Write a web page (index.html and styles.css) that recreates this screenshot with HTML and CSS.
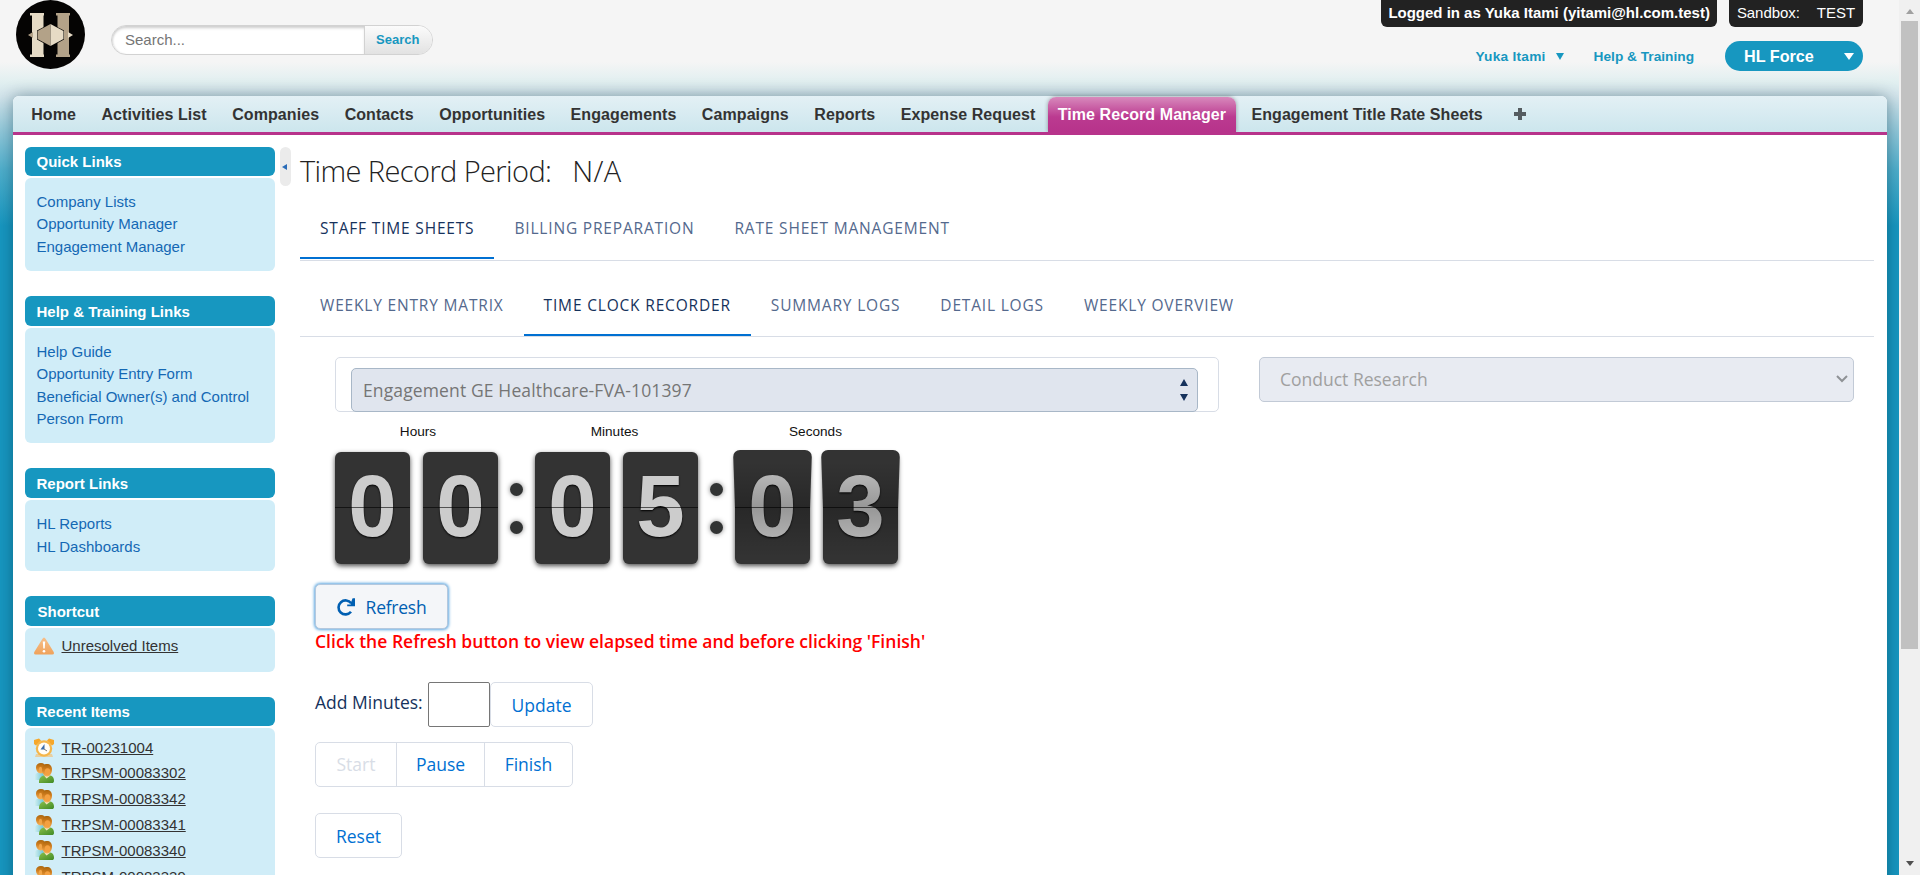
FILE: index.html
```html
<!DOCTYPE html>
<html lang="en">
<head>
<meta charset="utf-8">
<title>Time Record Manager</title>
<link rel="stylesheet" href="styles.css">
</head>
<body>
<svg class="defs" width="0" height="0">
  <defs>
    <linearGradient id="hairGold" x1="0" y1="0" x2="0" y2="1"><stop offset="0" stop-color="#a9640c"/><stop offset=".4" stop-color="#cf7d1e"/><stop offset="1" stop-color="#f8b45c"/></linearGradient>
    <linearGradient id="coatGreen" x1="0" y1="0" x2="1" y2="1"><stop offset="0" stop-color="#8cc04a"/><stop offset="1" stop-color="#3f8a26"/></linearGradient>
    <linearGradient id="coatBlue" x1="0" y1="0" x2="1" y2="0"><stop offset="0" stop-color="#d8f1f4"/><stop offset="1" stop-color="#5fc0cf"/></linearGradient>
    <linearGradient id="warn" x1="0" y1="0" x2="0" y2="1"><stop offset="0" stop-color="#f6c08c"/><stop offset="1" stop-color="#f0a25a"/></linearGradient>
    <symbol id="people" viewBox="0 0 20 20">
      <path d="M0 16.500c0-4.500 2-7 5-7h4l2 7.500H2z" fill="url(#coatBlue)"/>
      <path d="M2 4.500C2 1.500 4 0 7 0s4.500 1.500 4.500 4.500-1.500 6-4.500 6-5-3-5-6z" fill="url(#hairGold)"/>
      <path d="M5 20c-.5-5 2.500-7.500 6-7.500h4c3.500 0 5 2 5 5.500 0 1.500-1 2-2 2z" fill="url(#coatGreen)"/>
      <path d="M10 12.500l2.500 3 4-3z" fill="#f3e3c0"/>
      <path d="M8 6.500C8 3 10 1 13 1s5 2 5 5.500-2 7-5 7-5-3.500-5-7z" fill="url(#hairGold)"/>
      <ellipse cx="13.500" cy="8.800" rx="2.800" ry="3.500" fill="#f4a040"/>
      <ellipse cx="6.500" cy="6.500" rx="1.600" ry="2.800" fill="#f2a648"/>
    </symbol>
  </defs>
</svg>
<div class="page">
  <div class="app">
    <header class="header">
      <svg class="logo" viewBox="0 0 69 69">
        <circle cx="34.500" cy="34.500" r="34.500" fill="#050403"/>
        <g fill="#e6dbc5"><rect x="16" y="13" width="11.500" height="44"/><rect x="14" y="13" width="14" height="2.500"/><rect x="14" y="54.500" width="14" height="2.500"/></g>
        <g fill="#b3a288"><rect x="41.500" y="13" width="11.500" height="44"/><rect x="40" y="13" width="14" height="2.500"/><rect x="40" y="54.500" width="14" height="2.500"/></g>
        <path d="M12 35l5-3v6z" fill="#b3a288"/><path d="M57 35l-5-3v6z" fill="#e6dbc5"/>
        <path d="M34.500 23.500l13.500 7v9l-13.500 7.500L21 39.500v-9z" fill="#050403"/>
        <path d="M34.500 24L21.500 31v8l13 7z" fill="#b3a288"/><path d="M34.500 24l13 7v8l-13 7z" fill="#e6dbc5"/>
      </svg>
      <div class="search"><div class="search-field">Search...</div><div class="search-button">Search</div></div>
      <div class="header-right">
        <div class="badges"><div class="badge strong">Logged in as Yuka Itami (yitami@hl.com.test)</div><div class="badge env"><span>Sandbox:</span><span>TEST</span></div></div>
        <div class="user-links"><span class="user">Yuka Itami</span><i class="caret"></i><span class="help">Help &amp; Training</span><div class="app-menu"><span>HL Force</span><i class="caret white"></i></div></div>
      </div>
    </header>
    <div class="panel">
      <nav class="nav">
        <a>Home</a><a>Activities List</a><a>Companies</a><a>Contacts</a><a>Opportunities</a><a>Engagements</a><a>Campaigns</a><a>Reports</a><a>Expense Request</a><a class="current">Time Record Manager</a><a>Engagement Title Rate Sheets</a>
        <svg class="plus" viewBox="0 0 12 12"><path d="M4 0h4v4h4v4H8v4H4V8H0V4h4z" fill="#555c60"/></svg>
      </nav>
      <div class="content">
        <aside class="sidebar">
          <section class="box"><h3>Quick Links</h3><div class="links"><a>Company Lists</a><a>Opportunity Manager</a><a>Engagement Manager</a></div></section>
          <section class="box tall"><h3>Help &amp; Training Links</h3><div class="links"><a>Help Guide</a><a>Opportunity Entry Form</a><a>Beneficial Owner(s) and Control Person Form</a></div></section>
          <section class="box tall"><h3>Report Links</h3><div class="links"><a>HL Reports</a><a>HL Dashboards</a></div></section>
          <section class="box tall"><h3 class="nudge">Shortcut</h3><div class="items single"><a><svg viewBox="0 0 20 20"><path d="M8.300 3q1.700-3 3.400 0l8 13q1 2.500-1.500 2.500H1.800Q-.7 18.500.3 16z" fill="url(#warn)"/><path d="M8.800 5.500h2.400l-.5 7H9.300z" fill="#fff"/><circle cx="10" cy="15.200" r="1.300" fill="#fff"/></svg><span>Unresolved Items</span></a></div></section>
          <section class="box"><h3>Recent Items</h3><div class="items recent">
            <a><svg viewBox="0 0 20 20"><path d="M0 2l5-1.500 2 2L2 7.500 0 6zM20 2l-5-1.500-2 2 5 5 2-1.500z" fill="#f6a72a"/><path d="M2 16h16l1 3H1z" fill="#e8cfa0"/><circle cx="10" cy="10.500" r="8.200" fill="#f5b64a"/><circle cx="10" cy="10.500" r="6" fill="#fffdf8"/><path d="M10.500 6v5.500H6.500z" fill="#3a6aa8"/><path d="M10 11l3 2" stroke="#777" fill="none"/></svg><span>TR-00231004</span></a>
            <a><svg><use href="#people"/></svg><span>TRPSM-00083302</span></a>
            <a><svg><use href="#people"/></svg><span>TRPSM-00083342</span></a>
            <a><svg><use href="#people"/></svg><span>TRPSM-00083341</span></a>
            <a><svg><use href="#people"/></svg><span>TRPSM-00083340</span></a>
            <a><svg><use href="#people"/></svg><span>TRPSM-00083339</span></a>
          </div></section>
        </aside>
        <div class="collapse"><i></i></div>
        <main class="main">
          <h1>Time Record Period: <span>N/A</span></h1>
          <div class="tabs outer"><a class="on">STAFF TIME SHEETS</a><a>BILLING PREPARATION</a><a>RATE SHEET MANAGEMENT</a></div>
          <div class="tabs inner"><a>WEEKLY ENTRY MATRIX</a><a class="on">TIME CLOCK RECORDER</a><a>SUMMARY LOGS</a><a>DETAIL LOGS</a><a>WEEKLY OVERVIEW</a></div>
          <div class="fields">
            <div class="lookup"><div class="lookup-input"><span>Engagement GE Healthcare-FVA-101397</span><svg width="8" height="22" viewBox="0 0 8 22"><path d="M4 0l4 7H0zM4 22l4-7H0z" fill="#16325c"/></svg></div></div>
            <div class="select"><span>Conduct Research</span><svg width="12" height="8" viewBox="0 0 12 8"><path d="M1 1l5 5 5-5" fill="none" stroke="#8f9296" stroke-width="2"/></svg></div>
          </div>
          <div class="clock">
            <div class="unit"><label class="hours">Hours</label><div class="digits"><b>0</b><b>0</b></div></div>
            <div class="colon"><i></i><i></i></div>
            <div class="unit"><label class="minutes">Minutes</label><div class="digits"><b>0</b><b>5</b></div></div>
            <div class="colon"><i></i><i></i></div>
            <div class="unit"><label class="seconds">Seconds</label><div class="digits flipping"><b>0</b><b>3</b></div></div>
          </div>
          <div class="actions">
            <div class="button refresh"><svg width="18" height="18" viewBox="0 0 18 18"><path d="M14 13.800A7 7 0 1 1 14.200 5.300" fill="none" stroke="#005fb2" stroke-width="2.600"/><path d="M18 .3v8h-7.800V6.500h3.600V5L15.600.3z" fill="#005fb2"/></svg><span>Refresh</span></div>
            <p class="warning">Click the Refresh button to view elapsed time and before clicking 'Finish'</p>
            <div class="add-row"><label>Add Minutes:</label><input class="minutes-input" type="text"><div class="button update">Update</div></div>
            <div class="group"><div class="disabled">Start</div><div>Pause</div><div>Finish</div></div>
            <div class="button reset">Reset</div>
          </div>
        </main>
      </div>
    </div>
  </div>
  <div class="scrollbar"><i class="up"></i><div class="thumb"></div><i class="down"></i></div>
</div>
</body>
</html>
```

FILE: styles.css
```css
* { box-sizing: border-box; }
body { margin: 0; font-family: "Liberation Sans", Arial, sans-serif; font-size: 15px; color: #222; }
h1, h3, p { margin: 0; }
.defs { position: absolute; }
.page { display: flex; width: 1920px; height: 875px; overflow: hidden; }
.app { width: 1899px; height: 875px; overflow: hidden; background: linear-gradient(#f5f5f5 0, #f5f5f5 62px, #e1eff0 82px, #d2e4eb 96px, #8fc7d9 132px, #4fafcc 170px, #1797c0 226px); }

.header { display: flex; height: 96px; padding-left: 16px; }
.logo { width: 69px; height: 69px; margin-top: 0; }
.search { display: flex; width: 322px; height: 30px; margin: 25px 0 0 26px; border: 1px solid #d2d2d2; border-radius: 15px; overflow: hidden; background: #fff; }
.search-field { width: 252px; padding-left: 13px; line-height: 28px; color: #757575; box-shadow: inset 0 3px 3px -1px #ccc, inset 2px 0 2px -1px #ddd; border-radius: 15px 0 0 15px; }
.search-button { flex: 1; padding-left: 11px; border-left: 1px solid #d2d2d2; background: linear-gradient(#fbfbfb, #e2e2e2); color: #1797c0; font-size: 13px; font-weight: bold; line-height: 27px; }
.header-right { margin-left: auto; margin-right: 36px; }
.badges { display: flex; justify-content: flex-end; gap: 12px; }
.badge { height: 27px; padding: 0 8px; border-radius: 0 0 6px 6px; background: #222; color: #fff; line-height: 25px; }
.strong { padding: 0 7px; font-weight: bold; letter-spacing: -.01px; }
.env { display: flex; gap: 17px; letter-spacing: -.05px; }
.user-links { display: flex; align-items: center; justify-content: flex-end; height: 30px; margin-top: 14px; color: #1797c0; font-size: 13.700px; font-weight: bold; }
.user { letter-spacing: .25px; }
.caret { margin-left: 10px; border: 4.500px solid transparent; border-top: 7px solid #1797c0; border-bottom: 0; }
.help { margin-left: 30px; }
.app-menu { display: flex; align-items: center; justify-content: space-between; width: 138px; height: 30px; margin-left: 31px; padding: 0 9px 0 19px; border-radius: 15px; background: #1797c0; color: #fff; font-size: 16.200px; }
.caret.white { border-top-color: #fff; border-left-width: 5px; border-right-width: 5px; }

.panel { width: 1874px; height: 860px; margin-left: 13px; border-radius: 6px 6px 0 0; background: #fff; box-shadow: 0 0 16px rgba(0, 40, 60, .42); }
.nav { display: flex; height: 39px; padding-left: 5.500px; border-bottom: 3px solid #b7338b; border-radius: 6px 6px 0 0; background: linear-gradient(#e3f0f5, #cce6ed); font-size: 16px; font-weight: bold; letter-spacing: .08px; line-height: 37px; color: #333; }
.nav a { margin: 0 3.150px; padding: 0 9.600px; white-space: nowrap; }
.nav .current { margin: 1px 3px 0 0; padding-top: 0; border-radius: 8px 8px 0 0; background: linear-gradient(#d889bc, #bb3a90 20px, #b7338b); box-shadow: 0 0 4px rgba(0, 0, 0, .35); color: #fff; line-height: 35px; clip-path: inset(-4px -4px 0 -4px); }
.plus { width: 12px; height: 12px; margin: 12px 0 0 18px; }

.content { display: flex; padding: 12px 13px 0 12px; }
.sidebar { width: 250px; }
.box { margin-bottom: 25px; }
.box h3 { height: 29px; padding-left: 11.500px; border-radius: 6px; background: #1797c0; color: #fff; font-size: 15px; line-height: 30px; }
.tall h3 { height: 30px; line-height: 32px; }
.box h3.nudge { padding-left: 12.500px; }
.links { margin-top: 2px; padding: 13px 11.500px 12.500px; border-radius: 6px; background: #d0edf8; color: #1468b4; line-height: 22.400px; }
.links::after { content: ""; display: block; height: .3px; }
.links a { display: block; }
.items { margin-top: 2px; padding: 5px 9px; border-radius: 6px; background: #d0edf8; color: #333; }
.single { height: 44px; }
.recent { padding-top: 7px; height: 200px; }
.items a { display: flex; align-items: center; gap: 7.500px; height: 25.800px; text-decoration: none; }
.recent a:first-child { height: 25px; }
.items span { text-decoration: underline; }
.items svg { width: 20px; height: 20px; }
.collapse { display: flex; align-items: center; width: 11px; height: 39px; margin: 0 9px 0 5px; border-radius: 6px; background: #ebebeb; }
.collapse i { margin-left: 2px; border: 3.500px solid transparent; border-right: 5px solid #2a6cb8; border-left: 0; }

.main { flex: 1; height: 728px; font-family: "Open Sans", "Noto Sans", sans-serif; font-size: 17.500px; color: #16325c; }
h1 { height: 48px; font-size: 29px; font-weight: 300; line-height: 48px; letter-spacing: -.6px; color: #222; white-space: nowrap; }
h1 span { margin-left: 14px; letter-spacing: .3px; }
.tabs { display: flex; border-bottom: 1px solid #d8dde6; font-size: 15.500px; line-height: 58px; letter-spacing: .82px; color: #54698d; }
.outer { margin-top: 4px; height: 62px; }
.inner { margin-top: 15px; height: 61px; }
.tabs a { height: 60px; padding: 0 20px; }
.tabs .on { border-bottom: 2px solid #0070d2; color: #16325c; }
.fields { display: flex; gap: 40px; margin: 20px 0 0 35px; height: 54px; }
.lookup { width: 884px; height: 55px; padding: 10px 20px 0 15px; border: 1px solid #d8dde6; border-radius: 5px; }
.lookup-input { display: flex; align-items: center; justify-content: space-between; height: 44px; padding: 0 9px 0 11px; border: 1px solid #a8b7c7; border-radius: 5px; background: #e0e5ee; color: #757575; letter-spacing: .13px; }
.select { display: flex; align-items: center; justify-content: space-between; width: 595px; height: 45px; padding: 0 5px 2px 20px; border: 1px solid #c2cad6; border-radius: 5px; background: #e8ebf2; color: #a0a0a0; }

.clock { display: flex; margin-left: 35px; letter-spacing: 0; }
.unit { width: 163px; }
.unit label { display: block; padding-top: 12px; height: 41px; color: #111; font-family: "Liberation Sans", Arial, sans-serif; font-size: 13.600px; line-height: 18px; text-align: center; }
.unit .hours { padding-left: 3px; }
.unit .minutes { padding-right: 4px; }
.unit .seconds { padding-right: 2px; }
.digits { display: flex; justify-content: space-between; }
.digits b { position: relative; width: 75px; height: 112px; border-radius: 6px; background: #333; box-shadow: 0 2px 5px rgba(0, 0, 0, .7); color: #ccc; font-family: "Liberation Sans", Arial, sans-serif; font-size: 87px; line-height: 107px; text-align: center; text-shadow: 0 1px 2px #000; z-index: 0; }
.digits b::after { content: ""; position: absolute; left: 0; top: 55px; width: 100%; height: 1px; background: rgba(0, 0, 0, .6); }
.flipping b { color: #c2c2c2; }
.flipping b::before { content: ""; position: absolute; inset: -2px -2px 50% -2px; z-index: -1; border-radius: 7px 7px 0 0; background: #333; clip-path: polygon(0 0, 100% 0, calc(100% - 2px) 100%, 2px 100%); }
.flipping b::after { top: -1px; height: 112px; background: linear-gradient(transparent 10%, rgba(0, 0, 0, .22) 50%, rgba(0, 0, 0, .7) 50%, rgba(0, 0, 0, .7) 51%, rgba(0, 0, 0, .22) 51%, transparent 95%); }
.colon { display: flex; flex-direction: column; align-items: center; gap: 25px; width: 37px; padding-top: 72px; }
.colon i { width: 13px; height: 13px; border-radius: 50%; background: #323434; box-shadow: 0 0 5px rgba(0, 0, 0, .5); }

.actions { padding: 20px 0 0 15px; }
.button { display: flex; align-items: center; justify-content: center; height: 45px; border: 1px solid #d8dde6; border-radius: 5px; color: #0070d2; }
.refresh { gap: 11px; width: 133px; border-color: #b4c8de; background: #f4f6f9; box-shadow: 0 0 3px 1px #5fa8e0; color: #005fb2; letter-spacing: -.25px; }
.warning { height: 24px; color: #f00; font-weight: 600; line-height: 24px; letter-spacing: .01px; }
.add-row { display: flex; margin-top: 29px; height: 45px; }
.add-row label { width: 113px; line-height: 41px; }
.minutes-input { width: 62px; height: 45px; border: 1px solid #767676; border-radius: 2px; background: #fff; }
.update { width: 103px; }
.group { display: flex; width: 258px; height: 45px; margin-top: 15px; border: 1px solid #d8dde6; border-radius: 5px; color: #0070d2; line-height: 42px; text-align: center; }
.group div { width: 88px; border-left: 1px solid #d8dde6; }
.group .disabled { width: 80px; border-left: 0; color: #d8dde6; }
.reset { width: 87px; margin-top: 26px; }

.scrollbar { display: flex; flex-direction: column; align-items: center; width: 21px; height: 875px; background: #f0f0f0; }
.thumb { width: 17px; height: 628px; margin-top: 7px; background: #c1c1c1; }
.up { margin-top: 9px; border: 4.500px solid transparent; border-bottom: 5px solid #a0a0a0; border-top: 0; }
.down { margin: auto 0 9px; border: 4.500px solid transparent; border-top: 5px solid #505050; border-bottom: 0; }
```
